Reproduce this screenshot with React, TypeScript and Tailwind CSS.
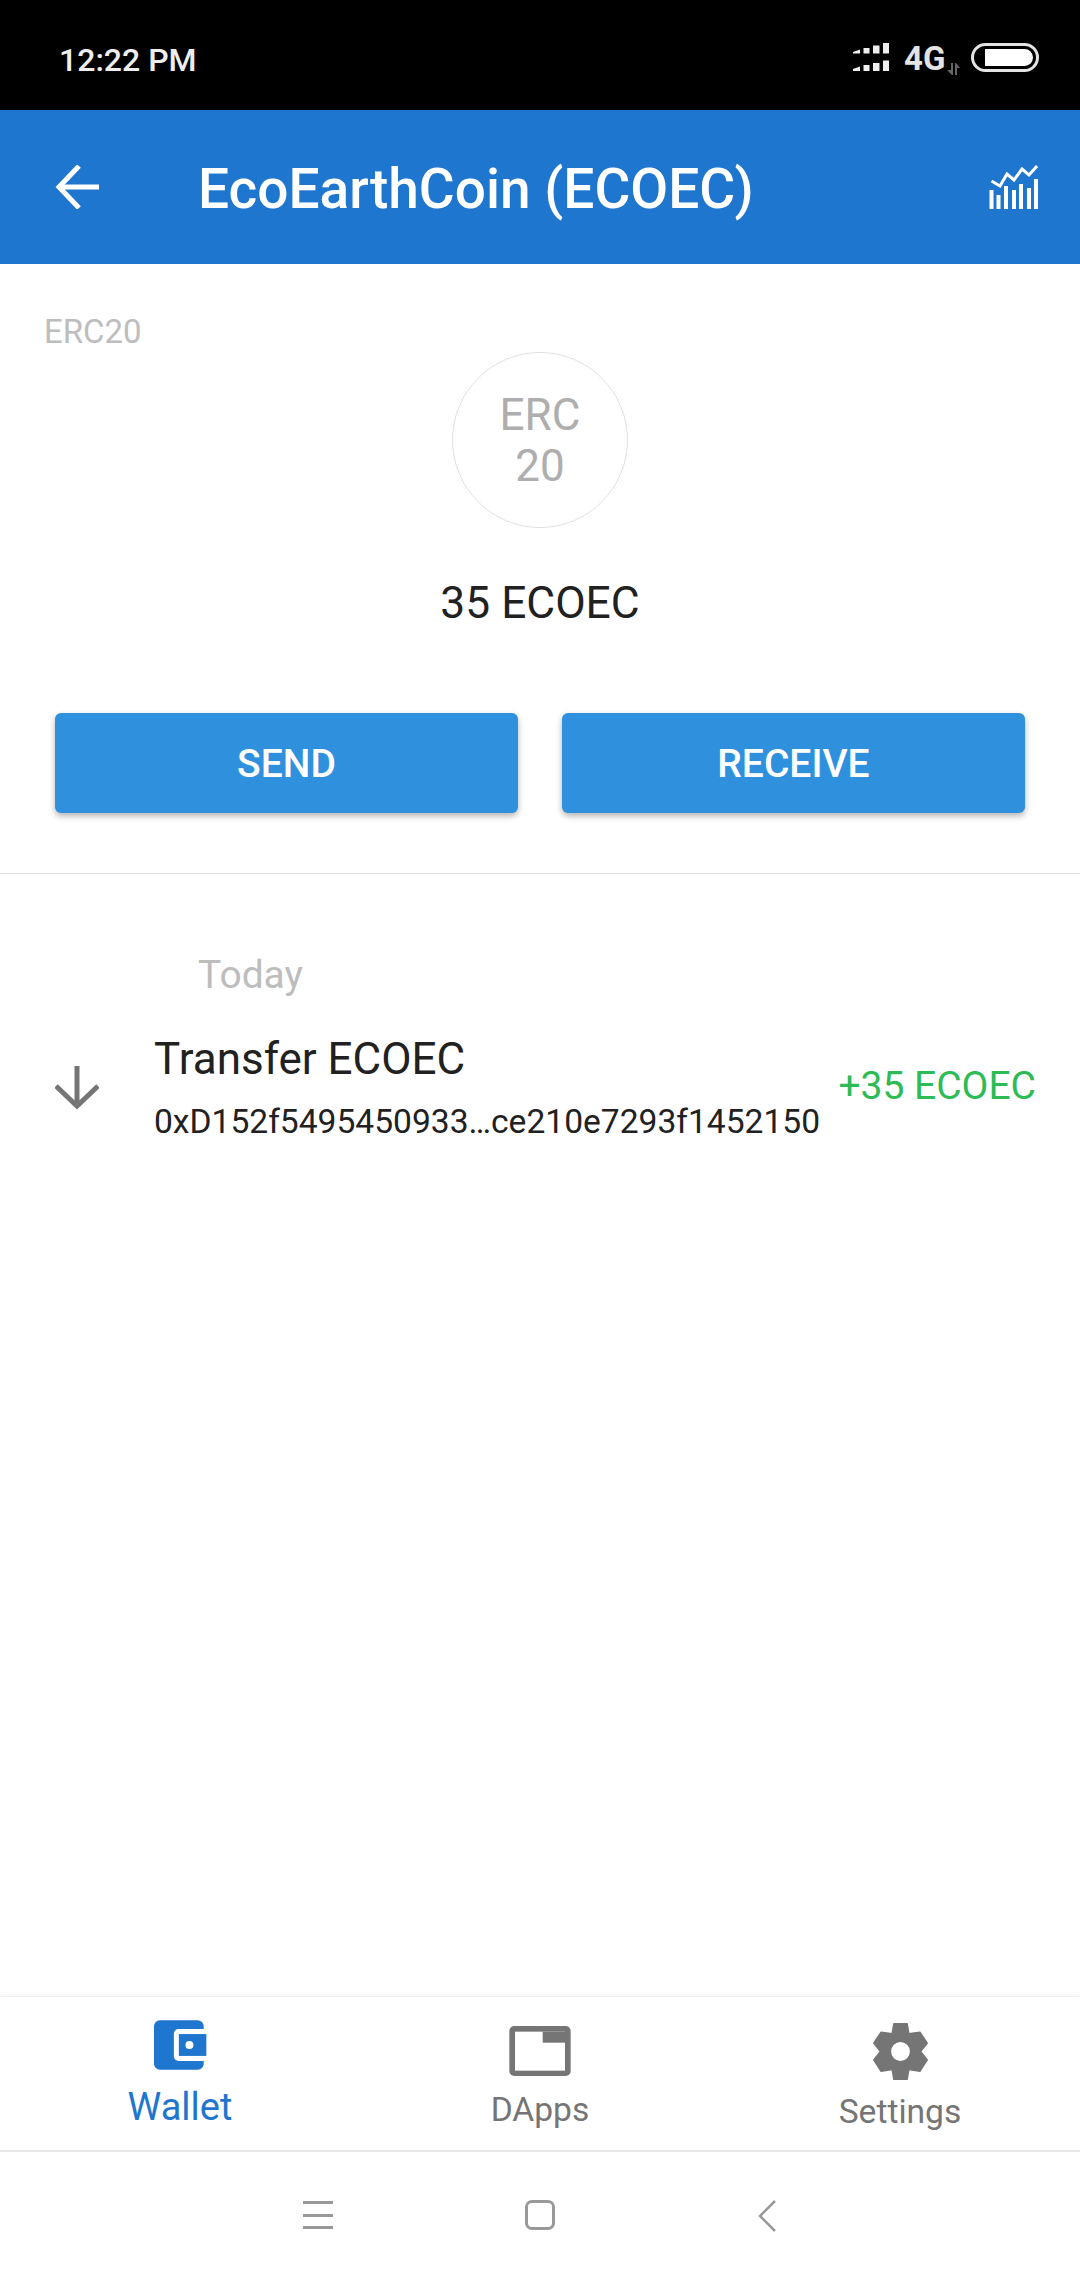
import React from 'react';

function SignalIcon() {
    return (
        <svg width="36" height="28" viewBox="0 0 36 28" fill="#eeeeee">
            <path d="M0 9 L7 6.500 V10.500 H0 Z" />
            <rect x="10.500" y="5" width="6" height="5.500" />
            <rect x="20" y="2.500" width="6.500" height="8" />
            <rect x="30" y="0" width="6" height="10.500" />
            <path d="M0 26 L7 23.500 V28 H0 Z" />
            <rect x="10.500" y="22" width="6" height="6" />
            <rect x="20" y="20" width="6.500" height="8" />
            <rect x="30" y="17.500" width="6" height="10.500" />
        </svg>
    );
}

function DataArrows() {
    return (
        <svg width="13" height="12" viewBox="0 0 13 12" fill="#666666">
            <path d="M4 0 H6 V12 H5 L0 7 H4 Z" />
            <path d="M8 0 H9 L13 5 H10 V12 H8 Z" />
        </svg>
    );
}

function BackArrow() {
    return (
        <svg width="44" height="44" viewBox="0 0 44 44" fill="none" stroke="white" strokeWidth="5">
            <path d="M44 22 H4" />
            <path d="M24 1 L4 22 L24 43" />
        </svg>
    );
}

function ChartIcon() {
    const bars = [
        [0.5, 25],
        [7.5, 30],
        [15, 21],
        [23, 25],
        [30, 19],
        [38, 23],
        [45, 14],
    ];
    return (
        <svg width="50" height="44" viewBox="0 0 50 44" fill="white">
            <path d="M2.500 16 L11 21 L18 9 L25 15 L33 4 L40 10 L48 1" fill="none" stroke="white" strokeWidth="3" />
            {bars.map(([x, y]) => (
                <rect key={x} x={x} y={y} width="4" height={44 - y} />
            ))}
        </svg>
    );
}

function DownArrow() {
    return (
        <svg width="44" height="44" viewBox="0 0 44 44" fill="none" stroke="#757575" strokeWidth="5">
            <path d="M22 0 V40" />
            <path d="M1 20 L22 40 L43 20" />
        </svg>
    );
}

function WalletIcon() {
    return (
        <svg width="53" height="50" viewBox="75 60 160 150">
            <rect x="75" y="60" width="150" height="150" rx="18" fill="#1f76cf" />
            <rect x="135" y="87" width="100" height="96" rx="14" fill="white" />
            <rect x="150" y="102" width="83" height="66" fill="#1f76cf" />
            <circle cx="182" cy="135" r="12" fill="white" />
        </svg>
    );
}

function DAppsIcon() {
    return (
        <svg width="62" height="50" viewBox="58 78 184 150">
            <rect x="58" y="78" width="184" height="150" rx="15" fill="#757575" />
            <rect x="75" y="95" width="150" height="117" fill="white" />
            <rect x="158" y="95" width="67" height="33" fill="#757575" />
        </svg>
    );
}

function GearIcon() {
    return (
        <svg width="55" height="57" viewBox="68 68 164 170">
            <path
                fillRule="evenodd"
                fill="#757575"
                stroke="#757575"
                strokeWidth="4"
                strokeLinejoin="round"
                d="M130 70 L170 70 L175 100 L208 95 L230 128 L210 153 L230 178 L208 212 L175 207 L170 236 L130 236 L125 207 L92 212 L70 178 L90 153 L70 128 L92 95 L125 100 Z M150 123 A30 30 0 1 0 150 183 A30 30 0 1 0 150 123 Z"
            />
        </svg>
    );
}

export default function App() {
    return (
        <div className="w-[1080px] h-[2280px] flex flex-col bg-white font-['Roboto',sans-serif] overflow-hidden">
            {/* Status bar */}
            <div className="h-[110px] bg-black flex items-start pt-[43px] pl-[59px] pr-[41px]">
                <span className="text-[32px] leading-[34px] font-medium text-[#eeeeee]">12:22 PM</span>
                <div className="ml-auto flex items-start">
                    <SignalIcon />
                    <span className="ml-[15px] mt-[1px] w-[40px] text-[33px] leading-[30px] font-bold text-[#e4e4e4]">4G</span>
                    <div className="mt-[20px] ml-[3px]">
                        <DataArrows />
                    </div>
                    <div className="ml-[11px] w-[68px] h-[29px] rounded-full border-[3px] border-[#e4e4e4] pl-[11px] pr-[3px] pt-[3px]">
                        <div className="h-[17px] bg-white rounded-r-full" />
                    </div>
                </div>
            </div>

            {/* Header */}
            <div className="h-[154px] bg-[#1f76cf] flex items-center pl-[55px] pr-[41px]">
                <BackArrow />
                <h1 className="ml-[99px] mt-[4px] text-[55px] leading-[60px] font-medium text-white">EcoEarthCoin (ECOEC)</h1>
                <div className="ml-auto">
                    <ChartIcon />
                </div>
            </div>

            {/* Token summary */}
            <div className="pt-[50px] pb-[60px] border-b border-[#e3e3e3] flex flex-col">
                <p className="pl-[44px] text-[33px] leading-[36px] text-[#bdbdbd]">ERC20</p>
                <div className="mt-[2px] self-center w-[176px] h-[176px] rounded-full border border-[#e0e0e0] flex items-center justify-center pt-[1px] text-center text-[44px] leading-[51px] text-[#aeaeae]">
                    ERC
                    <br />
                    20
                </div>
                <p className="mt-[50px] text-center text-[44.300px] leading-[50px] text-[#212121]">35 ECOEC</p>
                <div className="mt-[85px] px-[55px] flex gap-[44px]">
                    <button className="flex-1 h-[100px] pt-[3px] rounded-[6px] bg-[#2f91dd] text-white text-[39px] font-medium shadow-[0_3px_6px_rgba(0,0,0,0.3)]">
                        SEND
                    </button>
                    <button className="flex-1 h-[100px] pt-[3px] rounded-[6px] bg-[#2f91dd] text-white text-[39px] font-medium shadow-[0_3px_6px_rgba(0,0,0,0.3)]">
                        RECEIVE
                    </button>
                </div>
            </div>

            {/* Transactions */}
            <div className="flex-1">
                <p className="mt-[81px] pl-[198px] text-[39px] leading-[40px] text-[#bdbdbd]">Today</p>
                <div className="mt-[39px] pl-[55px] pr-[44px] flex items-center">
                    <DownArrow />
                    <div className="ml-[55px]">
                        <p className="text-[44px] leading-[50px] text-[#212121]">Transfer ECOEC</p>
                        <p className="mt-[18px] text-[33.600px] leading-[40px] text-[#212121] whitespace-nowrap">0xD152f5495450933…ce210e7293f1452150</p>
                    </div>
                    <span className="ml-auto -mt-[5px] text-[39px] leading-[44px] text-[#2dbb55] whitespace-nowrap">+35 ECOEC</span>
                </div>
            </div>

            {/* Bottom tabs */}
            <div className="h-[154px] grid grid-cols-3 border-t border-[#f0f0f0] shadow-[0_-2px_3px_rgba(0,0,0,0.03)]">
                <div className="flex flex-col items-center pt-[23px]">
                    <WalletIcon />
                    <span className="mt-[17px] text-[38px] leading-[40px] text-[#1f76cf]">Wallet</span>
                </div>
                <div className="flex flex-col items-center pt-[29px]">
                    <DAppsIcon />
                    <span className="mt-[15px] text-[33.600px] leading-[38px] text-[#757575]">DApps</span>
                </div>
                <div className="flex flex-col items-center pt-[26px]">
                    <GearIcon />
                    <span className="mt-[13px] text-[33.600px] leading-[38px] text-[#757575]">Settings</span>
                </div>
            </div>

            {/* Android navigation bar */}
            <div className="h-[130px] border-t-2 border-[#e5e5e5] flex items-start pt-[48px]">
                <div className="ml-[303px] w-[30px] h-[30px] flex flex-col justify-between py-[1px]">
                    <div className="h-[3px] bg-[#999999]" />
                    <div className="h-[3px] bg-[#999999]" />
                    <div className="h-[3px] bg-[#999999]" />
                </div>
                <div className="ml-[192px] w-[30px] h-[30px] rounded-[7px] border-[3px] border-[#999999]" />
                <svg className="ml-[203px]" width="18" height="32" viewBox="0 0 18 32" fill="none" stroke="#999999" strokeWidth="2.500">
                    <path d="M17 1 L2 16 L17 31" />
                </svg>
            </div>
        </div>
    );
}
